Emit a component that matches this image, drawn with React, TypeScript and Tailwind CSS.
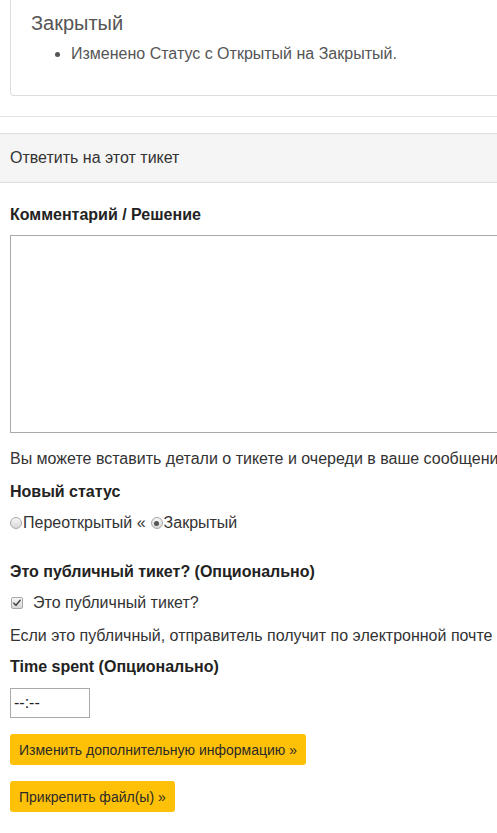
import React from 'react'

function Radio(props: { checked?: boolean }) {
  return (
    <span className="inline-flex h-[12px] w-[12px] shrink-0 items-center justify-center rounded-full border border-[#a8a8a8] bg-gradient-to-b from-[#f6f6f6] to-[#d8d8d8]">
      {props.checked ? <span className="h-[5px] w-[5px] rounded-full bg-[#555]" /> : null}
    </span>
  )
}

function Checkbox() {
  return (
    <span className="inline-flex h-[12px] w-[12px] shrink-0 items-center justify-center rounded-[2px] border border-[#a8a8a8] bg-gradient-to-b from-[#f6f6f6] to-[#d8d8d8]">
      <svg viewBox="0 0 12 12" className="h-[10px] w-[10px]">
        <path d="M2.2 6.2 L4.8 8.8 L9.8 2.8" fill="none" stroke="#444" strokeWidth="1.8" strokeLinecap="round" strokeLinejoin="round" />
      </svg>
    </span>
  )
}

function Label(props: { children: React.ReactNode; className?: string }) {
  return <div className={`text-[16px] font-bold leading-[20px] text-[#222] ${props.className ?? ''}`}>{props.children}</div>
}

export default function App() {
  return (
    <div className="h-[833px] w-[497px] overflow-hidden bg-white font-['Liberation_Sans',Arial,sans-serif] text-[16px] leading-[20px] text-[#333]">
      <div className="w-[780px]">
        {/* follow-up card */}
        <div className="ml-[10px] rounded-b-[4px] border border-t-0 border-[#dddddd] pb-[31px] pl-[20px] pt-[10px]">
          <div className="text-[20px] leading-[26px] text-[#555]">Закрытый</div>
          <ul className="mt-[8px] list-disc pl-[40px] text-[#555] marker:text-[#555]">
            <li>Изменено Статус с Открытый на Закрытый.</li>
          </ul>
        </div>

        <div className="mt-[20px] h-px bg-[#e3e3e3]" />

        {/* reply panel */}
        <div className="mt-[16px]">
          <div className="flex h-[50px] items-center border-y border-[#dddddd] bg-[#f5f5f5] pl-[10px] text-[#333]">
            Ответить на этот тикет
          </div>

          <div className="pl-[10px] pt-[22px]">
            <Label>Комментарий / Решение</Label>
            <div className="mt-[10px] h-[198px] w-[700px] border border-[#a9a9a9] bg-white" />

            <div className="mt-[16px] whitespace-nowrap">
              Вы можете вставить детали о тикете и очереди в ваше сообщение.
            </div>

            <Label className="mt-[13px]">Новый статус</Label>
            <div className="mt-[11px] flex items-center whitespace-nowrap">
              <Radio />
              <span className="ml-[1px]">Переоткрытый «</span>
              <span className="ml-[5px]" />
              <Radio checked />
              <span className="ml-[1px]">Закрытый</span>
            </div>

            <Label className="mt-[29px]">Это публичный тикет? (Опционально)</Label>
            <div className="mt-[11px] flex items-center whitespace-nowrap">
              <span className="ml-[1px]" />
              <Checkbox />
              <span className="ml-[10px]">Это публичный тикет?</span>
            </div>

            <div className="mt-[13px] whitespace-nowrap">
              Если это публичный, отправитель получит по электронной почте ваш комментарий или решение.
            </div>

            <Label className="mt-[11px]">Time spent (Опционально)</Label>
            <div className="mt-[11px] flex h-[30px] w-[80px] items-center border border-[#a9a9a9] pl-[3px] text-[#222]">
              --:--
            </div>

            <div className="mt-[16px] flex flex-col items-start gap-[16px]">
              <button className="h-[31px] rounded-[3px] bg-[#ffc107] px-[9px] text-[14px] text-[#2a2a2a]">
                Изменить дополнительную информацию »
              </button>
              <button className="h-[31px] rounded-[3px] bg-[#ffc107] px-[9px] text-[14px] text-[#2a2a2a]">
                Прикрепить файл(ы) »
              </button>
            </div>
          </div>
        </div>
      </div>
    </div>
  )
}
